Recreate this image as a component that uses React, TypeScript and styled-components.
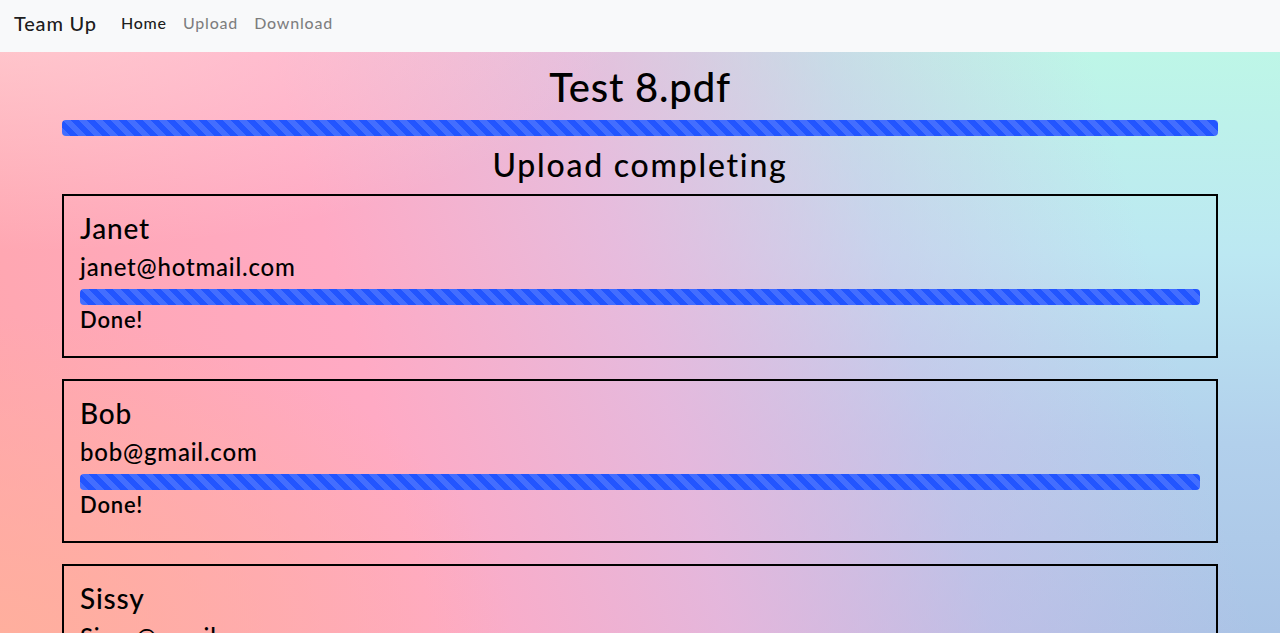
import React from 'react'
import styled, {createGlobalStyle} from 'styled-components'

const GlobalStyle = createGlobalStyle`
  html, body {
    margin: 0;
    padding: 0;
  }
  body {
    font-family: Lato, 'Open Sans', sans-serif;
    color: #000;
    min-height: 633px;
    background:
      radial-gradient(ellipse 50% 40% at 0% 0%, rgba(255, 240, 236, 0.5) 0%, rgba(255, 240, 236, 0) 100%),
      radial-gradient(ellipse 40% 50% at 0% 100%, rgba(255, 176, 156, 0.9) 0%, rgba(255, 176, 156, 0) 100%),
      linear-gradient(
        74deg,
        #ffa6ac 0%,
        #ffaac4 30%,
        rgba(238, 180, 218, 0.85) 50%,
        rgba(214, 186, 230, 0.45) 68%,
        rgba(200, 190, 232, 0) 86%
      ),
      linear-gradient(to bottom, #befae4 0%, #bce8f2 40%, #b2d0ec 70%, #aac4e6 100%);
    background-attachment: fixed;
  }
  * {
    box-sizing: border-box;
  }
`

const Navbar = styled.nav`
  height: 52px;
  background: #f8f9fa;
  display: flex;
  align-items: center;
  padding: 0 14px 7px;
  letter-spacing: 0.05em;
`

const Brand = styled.span`
  font-size: 20px;
  font-weight: 500;
  margin-right: 16px;
  color: rgba(0, 0, 0, 0.9);
`

const NavLink = styled.a<{$active?: boolean}>`
  font-size: 16px;
  font-weight: 500;
  padding: 0 8px;
  text-decoration: none;
  color: ${(p) => (p.$active ? 'rgba(0, 0, 0, 0.9)' : 'rgba(0, 0, 0, 0.5)')};
`

const Main = styled.main`
  padding: 11px 62px 0;
  letter-spacing: 0.05em;
`

const Title = styled.h1`
  margin: 0 0 9px;
  font-size: 40px;
  line-height: 48px;
  font-weight: 500;
  text-align: center;
`

const Subtitle = styled.h2`
  margin: 10px 0 10px;
  font-size: 32px;
  line-height: 38px;
  font-weight: 500;
  letter-spacing: 0.055em;
  text-align: center;
`

const Progress = styled.div`
  height: 16px;
  border-radius: 4px;
  overflow: hidden;
  background-color: #2255ff;
  background-image: linear-gradient(
    45deg,
    rgba(255, 255, 255, 0.15) 25%,
    transparent 25%,
    transparent 50%,
    rgba(255, 255, 255, 0.15) 50%,
    rgba(255, 255, 255, 0.15) 75%,
    transparent 75%,
    transparent
  );
  background-size: 16px 16px;
`

const Card = styled.section`
  border: 2px solid #000;
  height: 164px;
  padding: 15px 16px 0;
  margin-bottom: 21px;
`

const Name = styled.h3`
  margin: 0 0 7px;
  font-size: 28px;
  line-height: 34px;
  font-weight: 500;
`

const Email = styled.h4`
  margin: 0 0 8px;
  font-size: 24px;
  line-height: 29px;
  font-weight: 500;
`

const Status = styled.h5`
  margin: 2px 0 0;
  font-size: 22px;
  line-height: 26px;
  font-weight: 600;
`

const people = [
  {name: 'Janet', email: 'janet@hotmail.com'},
  {name: 'Bob', email: 'bob@gmail.com'},
  {name: 'Sissy', email: 'Sissy@gmail.com'},
]

export default function App() {
  return (
    <>
      <GlobalStyle />
      <Navbar>
        <Brand>Team Up</Brand>
        <NavLink $active>Home</NavLink>
        <NavLink>Upload</NavLink>
        <NavLink>Download</NavLink>
      </Navbar>
      <Main>
        <Title>Test 8.pdf</Title>
        <Progress />
        <Subtitle>Upload completing</Subtitle>
        {people.map((p) => (
          <Card key={p.email}>
            <Name>{p.name}</Name>
            <Email>{p.email}</Email>
            <Progress />
            <Status>Done!</Status>
          </Card>
        ))}
      </Main>
    </>
  )
}
